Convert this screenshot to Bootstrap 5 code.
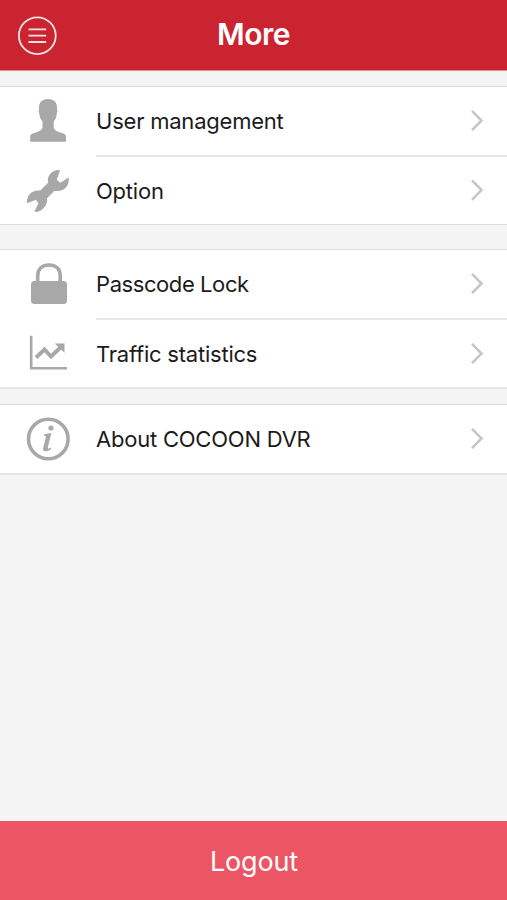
<!DOCTYPE html>
<html lang="en">
<head>
<meta charset="utf-8">
<meta name="viewport" content="width=device-width, initial-scale=1">
<title>More</title>
<link href="https://cdn.jsdelivr.net/npm/bootstrap@5.3.0/dist/css/bootstrap.min.css" rel="stylesheet">
<style>
body { background: #f4f4f4; color: #1b1b1b; font-family: Inter, "Liberation Sans", sans-serif; }
.topbar { height: 71px; background: #ca2430; border-bottom: 1px solid #dd8a8f; }
.topbar h1 { font-size: 30px; font-weight: 600; line-height: 68px; height: 70px; letter-spacing: -.5px; }
.menu-btn { width: 75px; height: 70px; }
.menu-group { border-top: 1px solid #dcdcdc; border-bottom: 2px solid #e5e5e5; margin-top: 15px; }
.menu-group.first { border-bottom: 1px solid #dcdcdc; }
.menu-group.second { margin-top: 24px; }
.menu-row { height: 68px; color: inherit; }
.menu-row .label-text { font-size: 22px; line-height: 68px; white-space: nowrap; letter-spacing: -.22px; }
.menu-row .label-text.tight { letter-spacing: -.42px; }
.menu-row + .menu-row { margin-top: 2px; height: 67px; }
.menu-row + .menu-row .cell-line { box-shadow: 0 -2px 0 #e7e7e7; }
.row-icon { width: 96px; height: 68px; fill: #a8a8a8; }
.chevron { width: 40px; height: 68px; }
.logout { height: 79px; background: #ec5564; font-size: 27px; line-height: 81px; letter-spacing: -.15px; }
.logout span { padding-left: 1px; }
</style>
</head>
<body>
<div class="d-flex flex-column vh-100 overflow-hidden">
  <header class="topbar d-flex align-items-center flex-shrink-0 text-white">
    <button class="menu-btn btn p-0 border-0 d-flex" aria-label="Menu">
      <svg width="75" height="70" fill="none" stroke="#fde3e4" stroke-width="1.8"><circle cx="37.3" cy="35.7" r="18.4"/><path d="M28.5 29.4H46.2M28.5 35.7H46.2M28.5 42H46.2"/></svg>
    </button>
    <h1 class="flex-grow-1 text-center m-0">More</h1>
    <div class="menu-btn"></div>
  </header>
  <main class="flex-grow-1">
    <section class="menu-group first bg-white">
      <a class="menu-row d-flex text-decoration-none" href="#">
        <svg class="row-icon flex-shrink-0" viewBox="0 87 96 68"><path d="M48 99C42 99 38.6 102.4 39 109C38.7 110 38.6 112 39.3 113.5C39.6 117.8 41 119.7 42.5 121.4V127C42 130.5 38 132 34 133C31 133.8 30.2 135 30.2 137V141.7H66V137C66 135 65 133.8 62 133C58 132 54 130.5 53.7 127V121.4C55.3 119.7 56.5 117.8 56.7 113.5C57.5 112 57.4 110 57 109C57.5 102.4 54 99 48 99Z"/></svg>
        <div class="cell-line d-flex flex-grow-1 justify-content-between"><span class="label-text">User management</span>
        <svg class="chevron" viewBox="0 0 40 68" fill="none" stroke="#c6c6c6" stroke-width="2.6"><path d="M5 23.8L14.5 33.5L5 43.2"/></svg></div>
      </a>
      <a class="menu-row d-flex text-decoration-none" href="#">
        <svg class="row-icon flex-shrink-0" viewBox="0 157 96 68"><path d="M60 170.2L56.8 179.8L60.2 182.8L68.7 177.6C69.3 183 67.6 187.3 63.4 189.4C60 191.1 56.5 191.2 54.5 190.7L47 198.3C47.9 202.5 45.4 207.8 40.5 210.8C38.6 211.9 36.3 212.2 34.4 211.6L38.5 203.2L35.8 199.7L27 203.3C26.7 198.5 28.5 194 32.5 192C35.6 190.5 38 190.4 40.3 190.6L48.3 182.5C46.9 178.2 49.4 173 53.8 171C56 170 58.3 169.7 60 170.2Z"/></svg>
        <div class="cell-line d-flex flex-grow-1 justify-content-between"><span class="label-text">Option</span>
        <svg class="chevron" viewBox="0 0 40 68" fill="none" stroke="#c6c6c6" stroke-width="2.6"><path d="M5 23.4L14.5 33.1L5 42.8"/></svg></div>
      </a>
    </section>
    <section class="menu-group second bg-white">
      <a class="menu-row d-flex text-decoration-none" href="#">
        <svg class="row-icon flex-shrink-0" viewBox="0 250 96 68"><rect x="31" y="281" width="36" height="23" rx="3.5"/><path d="M37.7 283V276C37.7 269 42 265 49 265S60.2 269 60.2 276V283" fill="none" stroke="#a8a8a8" stroke-width="3.6"/></svg>
        <div class="cell-line d-flex flex-grow-1 justify-content-between"><span class="label-text tight">Passcode Lock</span>
        <svg class="chevron" viewBox="0 0 40 68" fill="none" stroke="#c6c6c6" stroke-width="2.6"><path d="M5 23.8L14.5 33.5L5 43.2"/></svg></div>
      </a>
      <a class="menu-row d-flex text-decoration-none" href="#">
        <svg class="row-icon flex-shrink-0" viewBox="0 320 96 68"><path d="M31.2 335.7V368.3H67" fill="none" stroke="#a8a8a8" stroke-width="2.6"/><path d="M36 357.5L44.5 349.5L51 356.5L61 347" fill="none" stroke="#a8a8a8" stroke-width="4"/><path d="M54.8 343.6H64.5V352.8Z"/></svg>
        <div class="cell-line d-flex flex-grow-1 justify-content-between"><span class="label-text">Traffic statistics</span>
        <svg class="chevron" viewBox="0 0 40 68" fill="none" stroke="#c6c6c6" stroke-width="2.6"><path d="M5 23.8L14.5 33.5L5 43.2"/></svg></div>
      </a>
    </section>
    <section class="menu-group bg-white">
      <a class="menu-row d-flex text-decoration-none" href="#">
        <svg class="row-icon flex-shrink-0" viewBox="0 405 96 68"><circle cx="48.3" cy="439" r="19.8" fill="none" stroke="#a8a8a8" stroke-width="3.6"/><circle cx="51" cy="428" r="2.6"/><path d="M44 434.2L51.4 433L47.9 447C47.5 448.9 48.5 449.2 51.2 447.6L50.9 449.3C47 452.2 42 452.4 43.2 447.7L45.8 437.8C46.3 435.9 45.7 435.6 43.8 435.5Z"/></svg>
        <div class="cell-line d-flex flex-grow-1 justify-content-between"><span class="label-text">About COCOON DVR</span>
        <svg class="chevron" viewBox="0 0 40 68" fill="none" stroke="#c6c6c6" stroke-width="2.6"><path d="M5 23.8L14.5 33.5L5 43.2"/></svg></div>
      </a>
    </section>
  </main>
  <button class="logout btn w-100 rounded-0 border-0 p-0 text-white flex-shrink-0"><span>Logout</span></button>
</div>
<script src="https://cdn.jsdelivr.net/npm/bootstrap@5.3.0/dist/js/bootstrap.bundle.min.js"></script>
</body>
</html>
